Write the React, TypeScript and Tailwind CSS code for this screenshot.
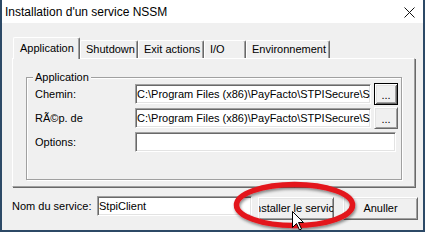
import type { ReactNode } from 'react'

const tabs = [
  { label: 'Shutdown', width: 'w-[58px]' },
  { label: 'Exit actions', width: 'w-[66px]' },
  { label: 'I/O', width: 'w-[42px]' },
  { label: 'Environnement', width: 'w-[84px]' },
]

const sunken =
  'border border-t-[#a0a0a0] border-l-[#a0a0a0] border-r-white border-b-white bg-white shadow-[inset_1px_1px_0_#696969,inset_-1px_-1px_0_#e3e3e3]'
const raised =
  'border border-t-white border-l-white border-r-[#696969] border-b-[#696969] bg-[#f0f0f0] shadow-[inset_1px_1px_0_#e3e3e3,inset_-1px_-1px_0_#a0a0a0]'

function TextBox({ value, className }: { value?: string; className: string }) {
  return (
    <div className={`${sunken} flex h-[20px] items-center overflow-hidden whitespace-nowrap pl-[1px] ${className}`}>
      {value}
    </div>
  )
}

function Row({ label, children }: { label: string; children: ReactNode }) {
  return (
    <div className="flex h-[22px] items-center">
      <span className="w-[100px]">{label}</span>
      {children}
    </div>
  )
}

export default function App() {
  const path = 'C:\\Program Files (x86)\\PayFacto\\STPISecure\\S'

  return (
    <div className="relative flex h-[232px] w-[425px] flex-col overflow-hidden border-x-2 border-b-2 border-[#2c4966] bg-[#f0f0f0] font-['Liberation_Sans',Arial,sans-serif] text-[11px] text-black">
      {/* title bar */}
      <div className="flex h-[23px] shrink-0 items-center justify-between bg-white pl-[3px] pr-[8px] text-[12px]">
        <span>Installation d&apos;un service NSSM</span>
        <svg width="11" height="11" viewBox="0 0 11 11" className="mt-[1px]">
          <path d="M0.5 0.5 L10.5 10.5 M10.5 0.5 L0.5 10.5" stroke="#111" strokeWidth="1" />
        </svg>
      </div>

      {/* tabs */}
      <div className="relative z-10 ml-[11px] mt-[14px] flex h-[21px] items-end">
        <div className="-mb-px flex h-[22px] w-[67px] items-center rounded-t-[2px] border-l border-t border-r border-white border-r-[#696969] bg-[#f0f0f0] pb-[1px] pl-[6px] shadow-[inset_-1px_0_0_#a0a0a0]">
          Application
        </div>
        {tabs.map((tab) => (
          <div
            key={tab.label}
            className={`flex h-[18px] ${tab.width} items-center rounded-t-[2px] border-l border-t border-r border-white border-r-[#696969] pl-[5px] shadow-[inset_-1px_0_0_#a0a0a0]`}
          >
            {tab.label}
          </div>
        ))}
      </div>

      {/* tab page */}
      <div className="ml-[10px] flex h-[129px] w-[403px] flex-col border border-white border-r-[#a0a0a0] border-b-[#a0a0a0] pl-[13px] pt-[12px] shadow-[1px_1px_0_#696969]">
        <fieldset className="h-[109px] w-[376px] border border-[#a0a0a0] shadow-[inset_1px_1px_0_#fff,1px_1px_0_#fff]">
          <legend className="ml-[6px] bg-[#f0f0f0] px-[2px] leading-[12px]">Application</legend>
          <div className="flex flex-col gap-[2px] pl-[8px]">
            <Row label="Chemin:">
              <TextBox value={path} className="w-[236px]" />
              <button
                type="button"
                className="ml-[3px] flex h-[22px] w-[24px] items-center justify-center border border-black bg-[#f0f0f0] pt-[3px] shadow-[inset_1px_1px_0_#fff,inset_-1px_-1px_0_#696969,inset_2px_2px_0_#e3e3e3,inset_-2px_-2px_0_#a0a0a0]"
              >
                ...
              </button>
            </Row>
            <Row label="RÃ©p. de">
              <TextBox value={path} className="w-[236px]" />
              <button type="button" className={`${raised} ml-[3px] flex h-[22px] w-[24px] items-center justify-center pt-[3px]`}>
                ...
              </button>
            </Row>
            <Row label="Options:">
              <TextBox className="w-[261px]" />
            </Row>
          </div>
        </fieldset>
      </div>

      {/* bottom row */}
      <div className="mt-[10px] flex h-[23px] items-start pl-[10px]">
        <span className="-mt-px flex h-[20px] w-[85px] items-center">Nom du service:</span>
        <TextBox value="StpiClient" className="-mt-px w-[155px]" />
        <button
          type="button"
          className={`${raised} ml-[6px] flex h-[23px] w-[76px] items-center justify-center overflow-hidden whitespace-nowrap`}
        >
          Installer le service
        </button>
        <button type="button" className={`${raised} ml-[9px] flex h-[23px] w-[75px] items-center justify-center`}>
          Anuller
        </button>
      </div>

      {/* red highlight drawn over the screenshot */}
      <svg className="pointer-events-none absolute left-[224px] top-[174px]" width="140" height="60" viewBox="0 0 140 60">
        <defs>
          <filter id="mark-shadow" x="-10%" y="-20%" width="120%" height="150%">
            <feDropShadow dx="1" dy="2" stdDeviation="1.4" floodColor="#000" floodOpacity="0.45" />
          </filter>
        </defs>
        <ellipse cx="68.5" cy="31" rx="58" ry="20.5" fill="none" stroke="#e3161d" strokeWidth="5.5" filter="url(#mark-shadow)" />
      </svg>

      {/* mouse pointer */}
      <svg className="pointer-events-none absolute left-[289px] top-[210px]" width="14" height="21" viewBox="0 0 14 21">
        <path d="M1.5 1.5 L1.5 17.5 L5.5 13.5 L8.5 20 L10.5 19 L7.5 12.5 L12.5 12.5 Z" fill="#fff" stroke="#000" strokeWidth="1" strokeLinejoin="miter" />
      </svg>
    </div>
  )
}
